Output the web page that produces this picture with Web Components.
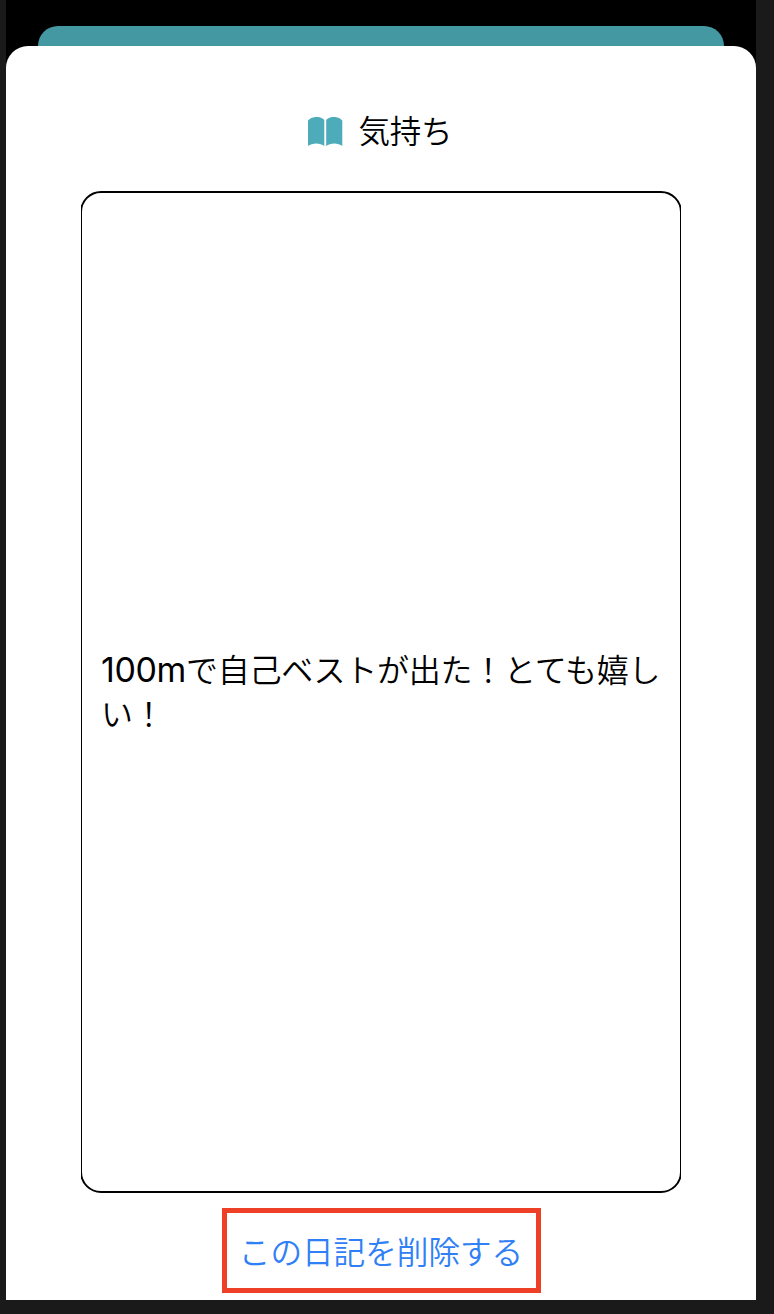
<!DOCTYPE html>
<html lang="ja">
<head>
<meta charset="utf-8">
<title>気持ち</title>
<style>
html, body { margin: 0; height: 100%; background: #1a1a1a; }
body { font-family: "Noto Sans CJK JP", sans-serif; color: #000; }
</style>
</head>
<body>
<phone-screen>
  <diary-sheet>
    <sheet-title slot="title">気持ち</sheet-title>
    <diary-entry><latin-text>100m</latin-text>で自己ベストが出た！とても嬉し<br>い！</diary-entry>
    <delete-button slot="action">この日記を削除する</delete-button>
  </diary-sheet>
</phone-screen>
<script>
const define = (name, html) => {
  const template = document.createElement('template');
  template.innerHTML = html;
  customElements.define(name, class extends HTMLElement {
    constructor() {
      super();
      this.attachShadow({ mode: 'open' }).append(template.content.cloneNode(true));
    }
  });
};

define('phone-screen', `
<style>
:host { display: flex; flex-direction: column; box-sizing: border-box; width: 750px; height: 1300px; margin-left: 6px; padding-top: 26px; background: #000; }
.behind { flex: none; height: 20px; margin: 0 32px; background: #4498a2; border-radius: 20px 20px 0 0; }
</style>
<div class="behind"></div><slot></slot>`);

define('diary-sheet', `
<style>
:host { flex: 1; display: flex; flex-direction: column; align-items: center; background: #fff; border-radius: 22px 22px 0 0; }
</style>
<slot name="title"></slot><slot></slot><slot name="action"></slot>`);

define('sheet-title', `
<style>
:host { display: flex; align-items: center; gap: 15.5px; width: 146px; height: 44px; margin-top: 64px; font-size: 31.5px; line-height: 44px; font-weight: 350; }
svg { display: block; flex: none; width: 35px; height: 30px; fill: #4eabb9; }
span { padding-bottom: 6px; white-space: nowrap; letter-spacing: -0.2px; }
</style>
<svg viewBox="0 0 35 30"><path d="M0 3.6C4-1.2 12.5-1.2 16.3 3V29C12.5 25.6 4 25.6 0 29Z"/><path d="M18.2 3C22-1.2 30.5-1.2 34.3 3.6V29C30.5 25.6 22 25.6 18.2 29Z"/></svg><span><slot></slot></span>`);

define('diary-entry', `
<style>
:host { display: block; width: 600px; height: 1002px; margin-top: 37px; overflow: hidden; }
.frame { display: flex; align-items: center; box-sizing: border-box; height: 100%; margin: 0 -1px; padding: 0 10px 5px 19px; border: 2px solid #000; border-radius: 21px; font-size: 32px; line-height: 44px; letter-spacing: -0.25px; font-weight: 350; }
</style>
<div class="frame"><div><slot></slot></div></div>`);

define('latin-text', `
<style>
:host { display: inline; font-family: Inter, sans-serif; font-size: 34px; font-weight: 400; line-height: 1; letter-spacing: -0.4px; }
</style><slot></slot>`);

define('delete-button', `
<style>
:host { display: block; margin-top: 15px; }
button { display: flex; align-items: center; justify-content: center; box-sizing: border-box; width: 319px; height: 85px; padding: 0 0 2px; border: 5px solid #ee4026; background: none; color: #2f80f6; font: 350 31.6px/44px "Noto Sans CJK JP", sans-serif; }
</style>
<button><span><slot></slot></span></button>`);
</script>
</body>
</html>
